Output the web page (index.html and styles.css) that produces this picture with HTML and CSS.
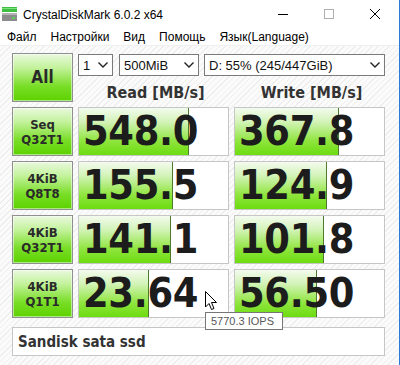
FILE: index.html
```html
<!DOCTYPE html>
<html>
<head>
  <title>CrystalDiskMark 6.0.2 x64</title>
  <link rel="stylesheet" href="styles.css">
</head>
<body>
  <div class="window">
    <div class="titlebar">
      <svg class="app-icon" width="15" height="14" viewBox="0 0 15 14">
        <rect x="0" y="0" width="15" height="5" fill="#3fbf3f"/>
        <rect x="0" y="1" width="15" height="1" fill="#7fe07f"/>
        <rect x="0" y="6" width="15" height="8" fill="#8c8c8c"/>
        <rect x="0" y="6" width="15" height="2" fill="#b4b4b4"/>
        <rect x="10" y="10" width="3" height="2" fill="#5ad05a"/>
      </svg>
      <span class="title">CrystalDiskMark 6.0.2 x64</span>
      <div class="controls">
        <svg width="46" height="29" viewBox="0 0 46 29"><line x1="18" y1="14.5" x2="28" y2="14.5" stroke="#000" stroke-width="1"/></svg>
        <svg width="46" height="29" viewBox="0 0 46 29"><rect x="18.5" y="9.5" width="9" height="9" fill="none" stroke="#b0b0b0" stroke-width="1"/></svg>
        <svg width="46" height="29" viewBox="0 0 46 29"><path d="M18 9 L28 19 M28 9 L18 19" stroke="#000" stroke-width="1"/></svg>
      </div>
    </div>

    <div class="menubar">
      <span class="menu-item">Файл</span>
      <span class="menu-item">Настройки</span>
      <span class="menu-item">Вид</span>
      <span class="menu-item">Помощь</span>
      <span class="menu-item">Язык(Language)</span>
    </div>

    <div class="panel">
      <div class="grid">
        <button class="test-btn all-btn">All</button>
        <div class="settings">
          <div class="selects">
            <div class="select select-count">1
              <svg class="chevron" width="10" height="6" viewBox="0 0 10 6"><path d="M0.5 0.5 L5 5 L9.5 0.5" fill="none" stroke="#222" stroke-width="1.4"/></svg>
            </div>
            <div class="select select-size">500MiB
              <svg class="chevron" width="10" height="6" viewBox="0 0 10 6"><path d="M0.5 0.5 L5 5 L9.5 0.5" fill="none" stroke="#222" stroke-width="1.4"/></svg>
            </div>
            <div class="select select-drive">D: 55% (245/447GiB)
              <svg class="chevron" width="10" height="6" viewBox="0 0 10 6"><path d="M0.5 0.5 L5 5 L9.5 0.5" fill="none" stroke="#222" stroke-width="1.4"/></svg>
            </div>
          </div>
          <div class="headers">
            <div class="col-title">Read [MB/s]</div>
            <div class="col-title">Write [MB/s]</div>
          </div>
        </div>

        <button class="test-btn"><span>Seq</span><span>Q32T1</span></button>
        <div class="meter"><div class="bar" style="width: 74%"></div><span class="value">548.0</span></div>
        <div class="meter"><div class="bar" style="width: 70%"></div><span class="value">367.8</span></div>

        <button class="test-btn"><span>4KiB</span><span>Q8T8</span></button>
        <div class="meter"><div class="bar" style="width: 63%"></div><span class="value">155.5</span></div>
        <div class="meter"><div class="bar" style="width: 62%"></div><span class="value">124.9</span></div>

        <button class="test-btn"><span>4KiB</span><span>Q32T1</span></button>
        <div class="meter"><div class="bar" style="width: 62%"></div><span class="value">141.1</span></div>
        <div class="meter"><div class="bar" style="width: 60%"></div><span class="value">101.8</span></div>

        <button class="test-btn"><span>4KiB</span><span>Q1T1</span></button>
        <div class="meter"><div class="bar" style="width: 47%"></div><span class="value">23.64</span></div>
        <div class="meter"><div class="bar" style="width: 55%"></div><span class="value">56.50</span></div>
      </div>

      <div class="comment">Sandisk sata ssd</div>
    </div>

    <svg class="cursor" width="13" height="20" viewBox="0 0 13 20">
      <path d="M0.5 0.5 L0.5 16 L4 12.5 L6.5 18.5 L9 17.5 L6.5 11.5 L11.5 11.5 Z" fill="#fff" stroke="#000" stroke-width="1"/>
    </svg>
    <div class="tooltip">5770.3 IOPS</div>
  </div>
</body>
</html>
```

FILE: styles.css
```css
:root {
  --text-color: #222;
  --border-color: #c6c6c6;
  --btn-border: #8f8f8f;
  --ui-font: 'Liberation Sans', Arial, sans-serif;
  --bold-font: 'DejaVu Sans Condensed', 'DejaVu Sans', sans-serif;
}

* {
  margin: 0;
  padding: 0;
  box-sizing: border-box;
}

body {
  width: 400px;
  height: 365px;
  overflow: hidden;
  font-family: var(--ui-font);
  color: var(--text-color);
  background-color: #fff;
}

.window {
  position: relative;
  width: 400px;
  height: 365px;
  border-right: 1px solid #2b7bd6;
  background-color: #fff;
}

.titlebar {
  display: flex;
  align-items: center;
  height: 29px;
  padding-left: 2px;
}

.app-icon {
  margin-right: 6px;
  margin-top: -2px;
}

.title {
  font-size: 12px;
  color: #000;
}

.controls {
  display: flex;
  margin-left: auto;
  margin-right: 1px;
}

.menubar {
  display: flex;
  height: 17px;
  align-items: center;
  border-bottom: 1px solid #f0f0f0;
}

.menu-item {
  font-size: 12px;
  color: #000;
  padding: 0 7px;
}

.panel {
  height: 319px;
  padding: 7px 0 0 12px;
  background-color: #f9f9f9;
  background-image: repeating-linear-gradient(135deg, #fbfbfb 0 3px, #eeeeee 3px 4px);
}

.grid {
  display: grid;
  grid-template-columns: 61px 151px 151px;
  grid-template-rows: 49px 49px 49px 49px 49px;
  gap: 5px;
}

.test-btn {
  display: flex;
  flex-direction: column;
  align-items: center;
  justify-content: center;
  border: 1px solid var(--btn-border);
  background: linear-gradient(#eaf9de 0%, #c2f29a 30%, #7ade28 68%, #5cd200 100%);
  box-shadow: inset 0 0 0 1px rgba(255, 255, 255, 0.5);
  font-family: var(--bold-font);
  font-weight: 700;
  font-size: 13px;
  line-height: 15px;
  color: #2a2a2a;
}

.all-btn {
  font-size: 17px;
}

.settings {
  grid-column: span 2;
  display: flex;
  flex-direction: column;
}

.selects {
  display: flex;
  gap: 5px;
  margin-top: 1px;
}

.select {
  display: flex;
  align-items: center;
  height: 22px;
  padding: 0 4px 0 4px;
  border: 1px solid #7a7a7a;
  background-color: #fff;
  font-size: 13px;
  color: #111;
}

.chevron {
  margin-left: auto;
}

.select-count {
  width: 35px;
}

.select-size {
  width: 80px;
  margin-left: 1px;
}

.select-drive {
  width: 181px;
}

.headers {
  display: flex;
  gap: 5px;
  margin-top: 7px;
}

.col-title {
  width: 151px;
  text-align: center;
  font-family: var(--bold-font);
  font-weight: 700;
  font-size: 16px;
  color: #333;
  padding-left: 4px;
}

.meter {
  position: relative;
  display: flex;
  align-items: center;
  border: 1px solid var(--border-color);
  background-color: #fff;
  overflow: hidden;
}

.bar {
  position: absolute;
  top: 0;
  left: 0;
  bottom: 0;
  background: linear-gradient(#f4fbef 0%, #d2f3b6 30%, #8fe53e 70%, #6cdc10 100%);
  border-right: 1px solid #4d7a2c;
}

.value {
  position: relative;
  padding-left: 4px;
  font-family: var(--bold-font);
  font-weight: 700;
  font-size: 41px;
  line-height: 1;
  letter-spacing: -0.3px;
  color: #1c1c1c;
}

.comment {
  display: flex;
  align-items: center;
  width: 373px;
  height: 29px;
  margin-top: 9px;
  padding-left: 5px;
  border: 1px solid var(--border-color);
  background-color: #fff;
  font-family: var(--bold-font);
  font-weight: 700;
  font-size: 15px;
  color: #333;
}

.cursor {
  position: absolute;
  left: 205px;
  top: 291px;
}

.tooltip {
  position: absolute;
  left: 205px;
  top: 312px;
  width: 78px;
  height: 18px;
  padding-left: 5px;
  border: 1px solid #767676;
  background-color: #fff;
  font-size: 11px;
  line-height: 16px;
  color: #575757;
}
```
